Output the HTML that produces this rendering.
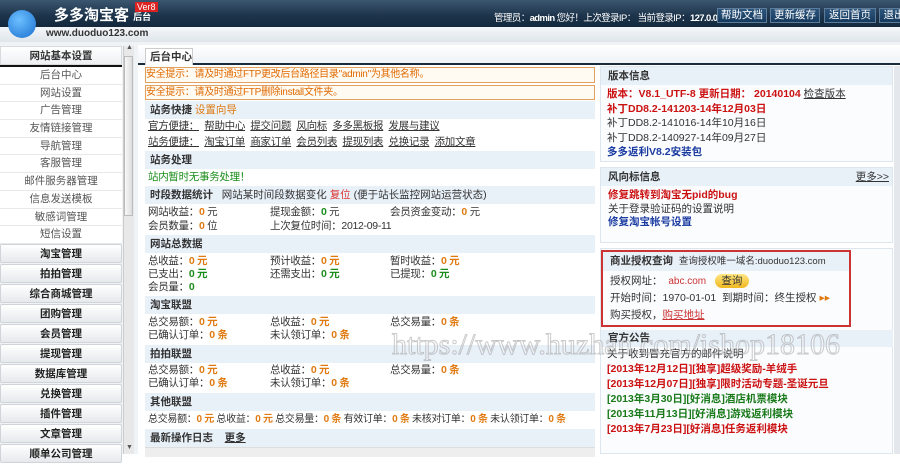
<!DOCTYPE html>
<html><head><meta charset="utf-8"><style>
*{margin:0;padding:0;box-sizing:border-box}
body{width:900px;height:454px;overflow:hidden;background:#fff;font-family:"Liberation Sans","Noto Sans CJK SC",sans-serif;font-size:10.5px;color:#333;position:relative}
.a{position:absolute;white-space:nowrap}
#hd{left:0;top:0;width:900px;height:27px;background:linear-gradient(#3b5670,#1c334a 60%,#14293d)}
#strip{left:0;top:27px;width:900px;height:15px;background:linear-gradient(#f4f7fa,#dfe5ea)}
.btn{top:8px;height:15px;background:linear-gradient(#2d557c,#163a5e);border:1px solid #5d7c9a;color:#fff;font-size:10.5px;text-align:center;line-height:13px}
.side{left:0;width:122px;text-align:center;font-size:10.5px}
.it{height:17.7px;line-height:17px;color:#555;border-bottom:1px solid #e8e8e8;background:#fff}
.bt{height:19px;line-height:18px;font-weight:bold;color:#222;background:linear-gradient(#fff,#e6e9ec);border:1px solid #d0d4d8;border-radius:2px;margin-bottom:1px}
.sec{left:145px;width:450px;height:18px;background:#e8f0f8;line-height:18px;padding-left:5px;font-weight:bold;color:#333}
.row{left:148px;line-height:13px;letter-spacing:-0.3px}
.o{color:#e07a10;font-weight:bold}
.g{color:#1a8c1a;font-weight:bold}
.box{border:1px solid #dde6ef;background:#fafcfe}
.rh{background:#e8f0f8;height:18px;line-height:18px;padding-left:7px;font-weight:bold}
u{text-decoration:underline}
</style></head><body>
<div class="a" id="hd"></div>
<div class="a" id="strip"></div>
<div class="a" style="left:8px;top:10px;width:28px;height:28px;border-radius:50%;background:radial-gradient(circle at 40% 35%,#6cc0ff,#1a6fd0);"></div>
<div class="a" style="left:54px;top:4px;font-size:15px;font-weight:bold;color:#fff">多多淘宝客 <span style="font-size:9px">后台</span></div>
<div class="a" style="left:135px;top:2px;background:#d22;color:#fff;font-size:9px;padding:0 2px">Ver8</div>
<div class="a" style="left:46px;top:28px;font-size:10px;font-weight:bold;color:#333">www.duoduo123.com</div>
<div class="a" style="left:494px;top:10px;color:#fff;font-size:9.5px;letter-spacing:-0.6px">管理员：<b>admin</b> 您好！上次登录IP： 当前登录IP：<b>127.0.0.1</b></div>
<div class="a btn" style="left:717px;width:50px">帮助文档</div>
<div class="a btn" style="left:770px;width:50px">更新缓存</div>
<div class="a btn" style="left:824px;width:52px">返回首页</div>
<div class="a btn" style="left:879px;width:30px">退出</div>

<div class="a" style="left:0;top:42px;width:900px;height:412px;background:#f0f3f6"></div>
<div class="a side" style="top:46px;height:19px;line-height:19px;font-weight:bold;background:linear-gradient(#fff,#eef0f2);border:1px solid #d8dbde">网站基本设置</div>
<div class="a" style="left:0;top:65px;width:122px;height:3px;background:#111"></div>
<div class="a side" style="top:67px">
<div class="it">后台中心</div><div class="it">网站设置</div><div class="it">广告管理</div><div class="it">友情链接管理</div><div class="it">导航管理</div><div class="it">客服管理</div><div class="it">邮件服务器管理</div><div class="it">信息发送模板</div><div class="it">敏感词管理</div><div class="it">短信设置</div>
</div>
<div class="a side" style="top:244px">
<div class="bt">淘宝管理</div><div class="bt">拍拍管理</div><div class="bt">综合商城管理</div><div class="bt">团购管理</div><div class="bt">会员管理</div><div class="bt">提现管理</div><div class="bt">数据库管理</div><div class="bt">兑换管理</div><div class="bt">插件管理</div><div class="bt">文章管理</div><div class="bt">顺单公司管理</div>
</div>
<div class="a" style="left:123px;top:46px;width:11px;height:408px;background:#e8e8e8;border-left:1px solid #ccc"></div>
<div class="a" style="left:124px;top:56px;width:9px;height:160px;background:linear-gradient(90deg,#f8f8f8,#ddd);border:1px solid #bbb"></div>
<div class="a" style="left:126px;top:44px;font-size:7px;color:#555">▲</div>
<div class="a" style="left:126px;top:444px;font-size:7px;color:#555">▼</div>

<div class="a" style="left:138px;top:45px;width:762px;height:409px;background:#fff"></div>
<div class="a" style="left:138px;top:45px;width:762px;height:19px;background:linear-gradient(#fff,#eef2f6)"></div>
<div class="a" style="left:138px;top:63px;width:762px;height:2px;background:#1a2b3c"></div>
<div class="a" style="left:145px;top:48px;width:48px;height:17px;background:#fff;border:1px solid #ccc;border-bottom:none;font-weight:bold;line-height:16px;padding-left:4px;font-size:10.5px">后台中心</div>

<div class="a" style="left:145px;top:67px;width:450px;height:16px;border:1px solid #e2a060;background:#fffaf2;color:#e06a00;line-height:14px;font-size:10px;letter-spacing:-0.3px">安全提示：请及时通过FTP更改后台路径目录"admin"为其他名称。</div>
<div class="a" style="left:145px;top:85px;width:450px;height:15px;border:1px solid #e2a060;background:#fffaf2;color:#e06a00;line-height:13px;font-size:10px;letter-spacing:-0.3px">安全提示：请及时通过FTP删除install文件夹。</div>
<div class="a sec" style="top:101px">站务快捷 <span style="color:#e07a10;font-weight:normal">设置向导</span></div>
<div class="a row" style="top:120px"><u>官方便捷：</u>&nbsp; <u>帮助中心</u>&nbsp; <u>提交问题</u>&nbsp; <u>风向标</u>&nbsp; <u>多多黑板报</u>&nbsp; <u>发展与建议</u></div>
<div class="a row" style="top:136px"><u>站务便捷：</u>&nbsp; <u>淘宝订单</u>&nbsp; <u>商家订单</u>&nbsp; <u>会员列表</u>&nbsp; <u>提现列表</u>&nbsp; <u>兑换记录</u>&nbsp; <u>添加文章</u></div>
<div class="a sec" style="top:151px">站务处理</div>
<div class="a row" style="top:171px;color:#1a8c1a">站内暂时无事务处理！</div>
<div class="a sec" style="top:186px">时段数据统计 &nbsp;&nbsp;<span style="font-weight:normal">网站某时间段数据变化 <span style="color:#d33">复位</span> (便于站长监控网站运营状态)</span></div>
<div class="a row" style="top:206px">网站收益：<span class="o">0</span> 元</div><div class="a row" style="left:270px;top:206px">提现金额：<span class="g">0</span> 元</div><div class="a row" style="left:390px;top:206px">会员资金变动：<span class="o">0</span> 元</div>
<div class="a row" style="top:220px">会员数量：<span class="o">0</span> 位</div><div class="a row" style="left:270px;top:220px">上次复位时间：2012-09-11</div>
<div class="a sec" style="top:235px">网站总数据</div>
<div class="a row" style="top:255px">总收益：<span class="o">0 元</span></div><div class="a row" style="left:270px;top:255px">预计收益：<span class="o">0 元</span></div><div class="a row" style="left:390px;top:255px">暂时收益：<span class="o">0 元</span></div>
<div class="a row" style="top:268px">已支出：<span class="g">0 元</span></div><div class="a row" style="left:270px;top:268px">还需支出：<span class="g">0 元</span></div><div class="a row" style="left:390px;top:268px">已提现：<span class="g">0 元</span></div>
<div class="a row" style="top:281px">会员量：<span class="g">0</span></div>
<div class="a sec" style="top:296px">淘宝联盟</div>
<div class="a row" style="top:316px">总交易额：<span class="o">0 元</span></div><div class="a row" style="left:270px;top:316px">总收益：<span class="o">0 元</span></div><div class="a row" style="left:390px;top:316px">总交易量：<span class="o">0 条</span></div>
<div class="a row" style="top:329px">已确认订单：<span class="o">0 条</span></div><div class="a row" style="left:270px;top:329px">未认领订单：<span class="o">0 条</span></div>
<div class="a sec" style="top:345px">拍拍联盟</div>
<div class="a row" style="top:364px">总交易额：<span class="o">0 元</span></div><div class="a row" style="left:270px;top:364px">总收益：<span class="o">0 元</span></div><div class="a row" style="left:390px;top:364px">总交易量：<span class="o">0 条</span></div>
<div class="a row" style="top:377px">已确认订单：<span class="o">0 条</span></div><div class="a row" style="left:270px;top:377px">未认领订单：<span class="o">0 条</span></div>
<div class="a sec" style="top:393px">其他联盟</div>
<div class="a row" style="top:413px;font-size:10px;letter-spacing:-0.3px">总交易额：<span class="o">0 元</span> 总收益：<span class="o">0 元</span> 总交易量：<span class="o">0 条</span> 有效订单：<span class="o">0 条</span> 未核对订单：<span class="o">0 条</span> 未认领订单：<span class="o">0 条</span></div>
<div class="a sec" style="top:429px">最新操作日志 &nbsp;&nbsp;&nbsp;<u>更多</u></div>
<div class="a" style="left:145px;top:447px;width:450px;height:10px;background:#eee;border-top:1px solid #ddd"></div>

<div class="a box" style="left:600px;top:66px;width:293px;height:96px"><div class="rh">版本信息</div>
<div style="padding:2px 6px;line-height:14.5px"><span style="color:#c11;font-weight:bold">版本：V8.1_UTF-8 更新日期： 20140104</span> <u>检查版本</u><br><span style="color:#c11;font-weight:bold">补丁DD8.2-141203-14年12月03日</span><br>补丁DD8.2-141016-14年10月16日<br>补丁DD8.2-140927-14年09月27日<br><span style="color:#1a3aa0;font-weight:bold">多多返利V8.2安装包</span></div></div>
<div class="a box" style="left:600px;top:167px;width:293px;height:76px"><div class="rh">风向标信息<u style="float:right;margin-right:3px;font-weight:normal">更多&gt;&gt;</u></div>
<div style="padding:3px 7px;line-height:13.5px"><span style="color:#c11;font-weight:bold">修复跳转到淘宝无pid的bug</span><br>关于登录验证码的设置说明<br><span style="color:#1a3aa0;font-weight:bold">修复淘宝帐号设置</span></div></div>
<div class="a box" style="left:600px;top:248px;width:293px;height:206px"></div>
<div class="a" style="left:601px;top:250px;width:250px;height:77px;border:2px solid #c33;background:#fafcfe">
<div class="rh" style="height:19px">商业授权查询 &nbsp;<span style="font-weight:normal;font-size:9.5px">查询授权唯一域名:duoduo123.com</span></div>
<div style="padding:2px 7px;line-height:17px">授权网址： &nbsp;<span style="color:#c33;font-size:10px">abc.com</span> &nbsp;&nbsp;<span style="display:inline-block;width:34px;height:14px;border-radius:7px;background:linear-gradient(#ffe680,#f0b820);text-align:center;line-height:14px">查询</span><br>开始时间：1970-01-01 &nbsp;到期时间：终生授权 <span style="color:#e07a10">▸▸</span><br>购买授权，<u style="color:#c33">购买地址</u></div></div>
<div class="a" style="left:601px;top:330px;width:292px;height:17px;background:#e8f0f8;padding-left:7px;line-height:17px;font-weight:bold">官方公告</div>
<div class="a" style="left:607px;top:347px;line-height:15px;font-weight:bold">
<span style="font-weight:normal">关于收到冒充官方的邮件说明</span><br>
<span style="color:#c11">[2013年12月12日][独享]超级奖励-羊绒手</span><br>
<span style="color:#c11">[2013年12月07日][独享]限时活动专题-圣诞元旦</span><br>
<span style="color:#1a7a1a">[2013年3月30日][好消息]酒店机票模块</span><br>
<span style="color:#1a7a1a">[2013年11月13日][好消息]游戏返利模块</span><br>
<span style="color:#c11">[2013年7月23日][好消息]任务返利模块</span></div>
<div class="a" style="left:894px;top:66px;width:6px;height:388px;background:#e4e8ec"></div>

<div class="a" style="left:392px;top:328px;font-family:'Liberation Serif',serif;font-size:30px;color:rgba(255,255,255,0.3);-webkit-text-stroke:1px rgba(140,140,140,0.45)">https://www.huzhan.com/ishop18106</div>
</body></html>
